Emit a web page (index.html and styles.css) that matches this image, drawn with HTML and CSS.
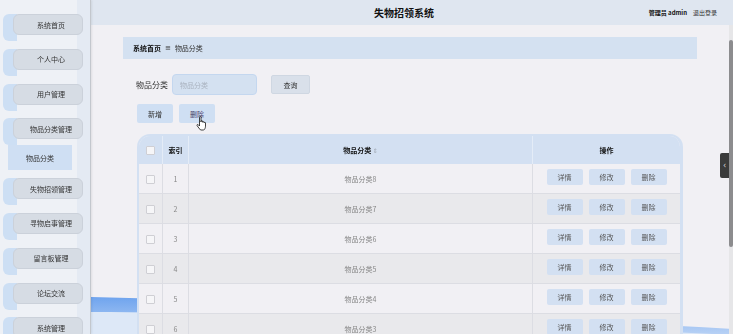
FILE: index.html
```html
<!DOCTYPE html>
<html lang="zh-CN">
<head>
  <meta charset="UTF-8">
  <meta name="viewport" content="width=device-width, initial-scale=1.0">
  <title>失物招领系统</title>
  <link rel="stylesheet" href="styles.css">
</head>
<body>
  <div class="layout">
    <aside class="sidebar">
      <nav class="menu">
        <div class="menu-item"><span class="menu-btn">系统首页</span></div>
        <div class="menu-item"><span class="menu-btn">个人中心</span></div>
        <div class="menu-item"><span class="menu-btn">用户管理</span></div>
        <div class="menu-group">
          <div class="menu-item"><span class="menu-btn">物品分类管理</span></div>
          <div class="submenu">物品分类</div>
        </div>
        <div class="menu-item"><span class="menu-btn">失物招领管理</span></div>
        <div class="menu-item"><span class="menu-btn">寻物启事管理</span></div>
        <div class="menu-item"><span class="menu-btn">留言板管理</span></div>
        <div class="menu-item"><span class="menu-btn">论坛交流</span></div>
        <div class="menu-item"><span class="menu-btn">系统管理</span></div>
      </nav>
    </aside>

    <main class="main">
      <svg class="wave" viewBox="0 0 642 334" preserveAspectRatio="none" aria-hidden="true">
        <defs>
          <linearGradient id="band" x1="0" y1="0" x2="0" y2="1">
            <stop offset="0" stop-color="#6fa4ee"/>
            <stop offset="1" stop-color="#b9d2f5"/>
          </linearGradient>
        </defs>
        <path d="M0,308 C160,312 380,324 642,333 L642,334 L0,334 Z" fill="#dde8f7"/>
        <path d="M0,297 C160,300 380,314 642,329 L642,335 C380,322 160,312 0,312 Z" fill="url(#band)"/>
      </svg>

      <header class="topbar">
        <div></div>
        <div class="title">失物招领系统</div>
        <div class="user"><b>管理员 admin</b><span>退出登录</span></div>
      </header>

      <div class="content">
        <div class="breadcrumb">
          <b>系统首页</b><span class="sep">≡</span><span>物品分类</span>
        </div>

        <div class="search">
          <label class="search-label">物品分类</label>
          <input class="search-input" type="text" placeholder="物品分类">
          <button class="btn btn-query">查询</button>
        </div>

        <div class="actions">
          <button class="btn">新增</button>
          <button class="btn btn-hover">删除
            <svg class="cursor" viewBox="0 0 12 15" aria-hidden="true">
              <path d="M3.5 1.2C3.5 0.3 5 0.3 5 1.2L5 6L5 5.2C5 4.4 6.5 4.4 6.5 5.2L6.5 6.2C6.5 5.5 8 5.5 8 6.2L8 6.8C8 6.1 9.5 6.1 9.5 6.9L9.5 10.2C9.5 12 8.6 13.4 7.8 14L4.6 14C3.6 13 2.2 11.2 1.2 9.8C0.6 9 1.4 8.1 2.2 8.7L3.5 10Z" fill="#fff" stroke="#111" stroke-width="0.8" stroke-linejoin="round"/>
            </svg>
          </button>
        </div>

        <div class="table-wrap">
          <table class="grid">
            <thead>
              <tr>
                <th class="col-check"><span class="checkbox"></span></th>
                <th class="col-index">索引</th>
                <th class="col-name">物品分类 <span class="sort">⇕</span></th>
                <th class="col-ops">操作</th>
              </tr>
            </thead>
            <tbody>
              <tr>
                <td class="col-check"><span class="checkbox"></span></td>
                <td class="col-index">1</td>
                <td class="col-name">物品分类8</td>
                <td class="col-ops"><div class="ops"><button class="op">详情</button><button class="op">修改</button><button class="op">删除</button></div></td>
              </tr>
              <tr>
                <td class="col-check"><span class="checkbox"></span></td>
                <td class="col-index">2</td>
                <td class="col-name">物品分类7</td>
                <td class="col-ops"><div class="ops"><button class="op">详情</button><button class="op">修改</button><button class="op">删除</button></div></td>
              </tr>
              <tr>
                <td class="col-check"><span class="checkbox"></span></td>
                <td class="col-index">3</td>
                <td class="col-name">物品分类6</td>
                <td class="col-ops"><div class="ops"><button class="op">详情</button><button class="op">修改</button><button class="op">删除</button></div></td>
              </tr>
              <tr>
                <td class="col-check"><span class="checkbox"></span></td>
                <td class="col-index">4</td>
                <td class="col-name">物品分类5</td>
                <td class="col-ops"><div class="ops"><button class="op">详情</button><button class="op">修改</button><button class="op">删除</button></div></td>
              </tr>
              <tr>
                <td class="col-check"><span class="checkbox"></span></td>
                <td class="col-index">5</td>
                <td class="col-name">物品分类4</td>
                <td class="col-ops"><div class="ops"><button class="op">详情</button><button class="op">修改</button><button class="op">删除</button></div></td>
              </tr>
              <tr>
                <td class="col-check"><span class="checkbox"></span></td>
                <td class="col-index">6</td>
                <td class="col-name">物品分类3</td>
                <td class="col-ops"><div class="ops"><button class="op">详情</button><button class="op">修改</button><button class="op">删除</button></div></td>
              </tr>
            </tbody>
          </table>
        </div>
      </div>
    </main>
  </div>

  <div class="side-tab">‹</div>
  <div class="scroll"><div class="scroll-thumb"></div></div>
</body>
</html>
```

FILE: styles.css
```css
html, body {
  margin: 0;
  height: 334px;
  overflow: hidden;
}
body {
  background-color: #f1f0f4;
  font-family: "Noto Sans CJK SC", "Noto Sans", sans-serif;
  font-size: 7px;
  color: #333;
}

.layout {
  display: flex;
  height: 334px;
}

/* — Sidebar — */
.sidebar {
  width: 90px;
  flex: none;
  background: linear-gradient(90deg, #eef1f6 0 77px, #e4eaf3 77px);
  border-right: 1px solid #c3c7cd;
  box-shadow: 1px 0 2px rgba(0,0,0,0.08);
  position: relative;
  z-index: 2;
}
.menu {
  display: flex;
  flex-direction: column;
  gap: 7.8px;
  padding-top: 14px;
}
.menu-item {
  margin-left: 3px;
  width: 80px;
  height: 27px;
  border-radius: 6px;
  background: linear-gradient(90deg, #cddff4 0 14px, transparent 14px);
}
.menu-btn {
  display: flex;
  align-items: center;
  justify-content: center;
  box-sizing: border-box;
  margin-left: 10px;
  width: 70px;
  height: 21px;
  padding-left: 6px;
  background-color: #d6dce4;
  border: 1px solid #cbd1da;
  border-radius: 6px;
  color: #333;
  white-space: nowrap;
}
.submenu {
  margin-left: 8px;
  width: 64px;
  height: 25px;
  display: flex;
  align-items: center;
  justify-content: center;
  background-color: #cfdff3;
  color: #333;
}

/* — Main — */
.main {
  flex: 1;
  position: relative;
  min-width: 0;
}
.wave {
  position: absolute;
  left: 0; top: 0;
  width: 100%; height: 100%;
  z-index: 0;
}
.topbar {
  position: relative;
  z-index: 1;
  height: 25px;
  background-color: #dfe6f0;
  display: grid;
  grid-template-columns: 1fr auto 1fr;
  align-items: center;
  padding-right: 16px;
}
.title {
  font-size: 10px;
  font-weight: bold;
  color: #111;
}
.user {
  justify-self: end;
  display: flex;
  gap: 6px;
  font-size: 6px;
  color: #333;
}
.user b {
  color: #111;
}

.content {
  position: relative;
  z-index: 1;
  padding: 12px 36px 0 32px;
}
.breadcrumb {
  height: 22px;
  display: flex;
  align-items: center;
  padding-left: 10px;
  background-color: #d4e1f1;
  color: #333;
}
.breadcrumb b {
  color: #111;
}
.breadcrumb .sep {
  margin: 0 4px;
  font-family: "DejaVu Sans", sans-serif;
}

.search {
  display: flex;
  align-items: center;
  margin-top: 15px;
  padding-left: 13px;
}
.search-label {
  font-size: 8px;
  color: #333;
}
.search-input {
  margin-left: 4px;
  width: 85px;
  height: 21px;
  box-sizing: border-box;
  padding: 0 7px;
  background-color: #d4e1f1;
  border: 1px solid #c4d7ef;
  border-radius: 4px;
  font-family: inherit;
  font-size: 7px;
  outline: none;
}
.search-input::placeholder {
  color: #a9b2bf;
}

.btn {
  width: 36px;
  height: 19px;
  padding: 0;
  border: none;
  border-radius: 2px;
  background-color: #cfdff3;
  font-family: inherit;
  font-size: 7px;
  color: #333;
}
.btn-query {
  margin-left: 14px;
  width: 39px;
  background-color: #d9e0ea;
  border: 1px solid #cfd7e2;
}
.btn-hover {
  position: relative;
  color: #4a3d6b;
}
.cursor {
  position: absolute;
  left: 17px; top: 12px;
  width: 12px; height: 15px;
}

.actions {
  display: flex;
  gap: 6px;
  margin-top: 9px;
  padding-left: 14px;
}

/* — Table — */
.table-wrap {
  margin-top: 11px;
  margin-left: 14px;
  width: 546px;
  box-sizing: border-box;
  border: 2px solid #d3e0f2;
  border-right-width: 3px;
  border-bottom: none;
  border-radius: 13px 13px 0 0;
  overflow: hidden;
}
.grid {
  width: 100%;
  border-collapse: collapse;
  table-layout: fixed;
}
.grid th, .grid td {
  padding: 0;
  text-align: center;
  border-right: 1px solid #dcdde3;
  border-bottom: 1px solid #dcdde3;
}
.grid th:last-child, .grid td:last-child {
  border-right: none;
}
.grid th {
  height: 28px;
  background-color: #d3e0f2;
  color: #111;
  font-weight: bold;
  border-right-color: #e4ecf7;
  border-bottom: none;
}
.grid td {
  height: 29px;
  color: #888;
}
.grid tbody tr:nth-child(odd) td {
  background-color: #f1f0f4;
}
.grid tbody tr:nth-child(even) td {
  background-color: #e9e9ec;
}
.col-check { width: 23px; }
.col-index { width: 25px; }
.col-name  { width: 343px; }

.checkbox {
  display: inline-block;
  width: 7px; height: 7px;
  border: 1px solid #cfcfd4;
  border-radius: 1px;
  background-color: #f6f6f8;
  vertical-align: middle;
}
.sort {
  font-family: "DejaVu Sans", sans-serif;
  font-size: 6px;
  color: #a0a8b4;
  font-weight: normal;
}
.ops {
  display: flex;
  justify-content: center;
  gap: 6px;
  padding-bottom: 3px;
}
.op {
  width: 36px;
  height: 16px;
  padding: 0;
  border: none;
  border-radius: 2px;
  background-color: #d3e0f2;
  font-family: inherit;
  font-size: 7px;
  color: #555;
}

/* — Right edge — */
.side-tab {
  position: fixed;
  top: 153px; right: 4px;
  width: 9px; height: 25px;
  display: flex;
  align-items: center;
  justify-content: center;
  background-color: #3b3b3b;
  border-radius: 2px 0 0 2px;
  color: #ddd;
  font-family: "DejaVu Sans", sans-serif;
  font-size: 8px;
}
.scroll {
  position: fixed;
  top: 0; right: 0;
  width: 4px; height: 334px;
  background-color: #e6e6e8;
}
.scroll-thumb {
  margin-top: 40px;
  height: 207px;
  background-color: #8c8c8e;
  border-radius: 2px;
}
```
